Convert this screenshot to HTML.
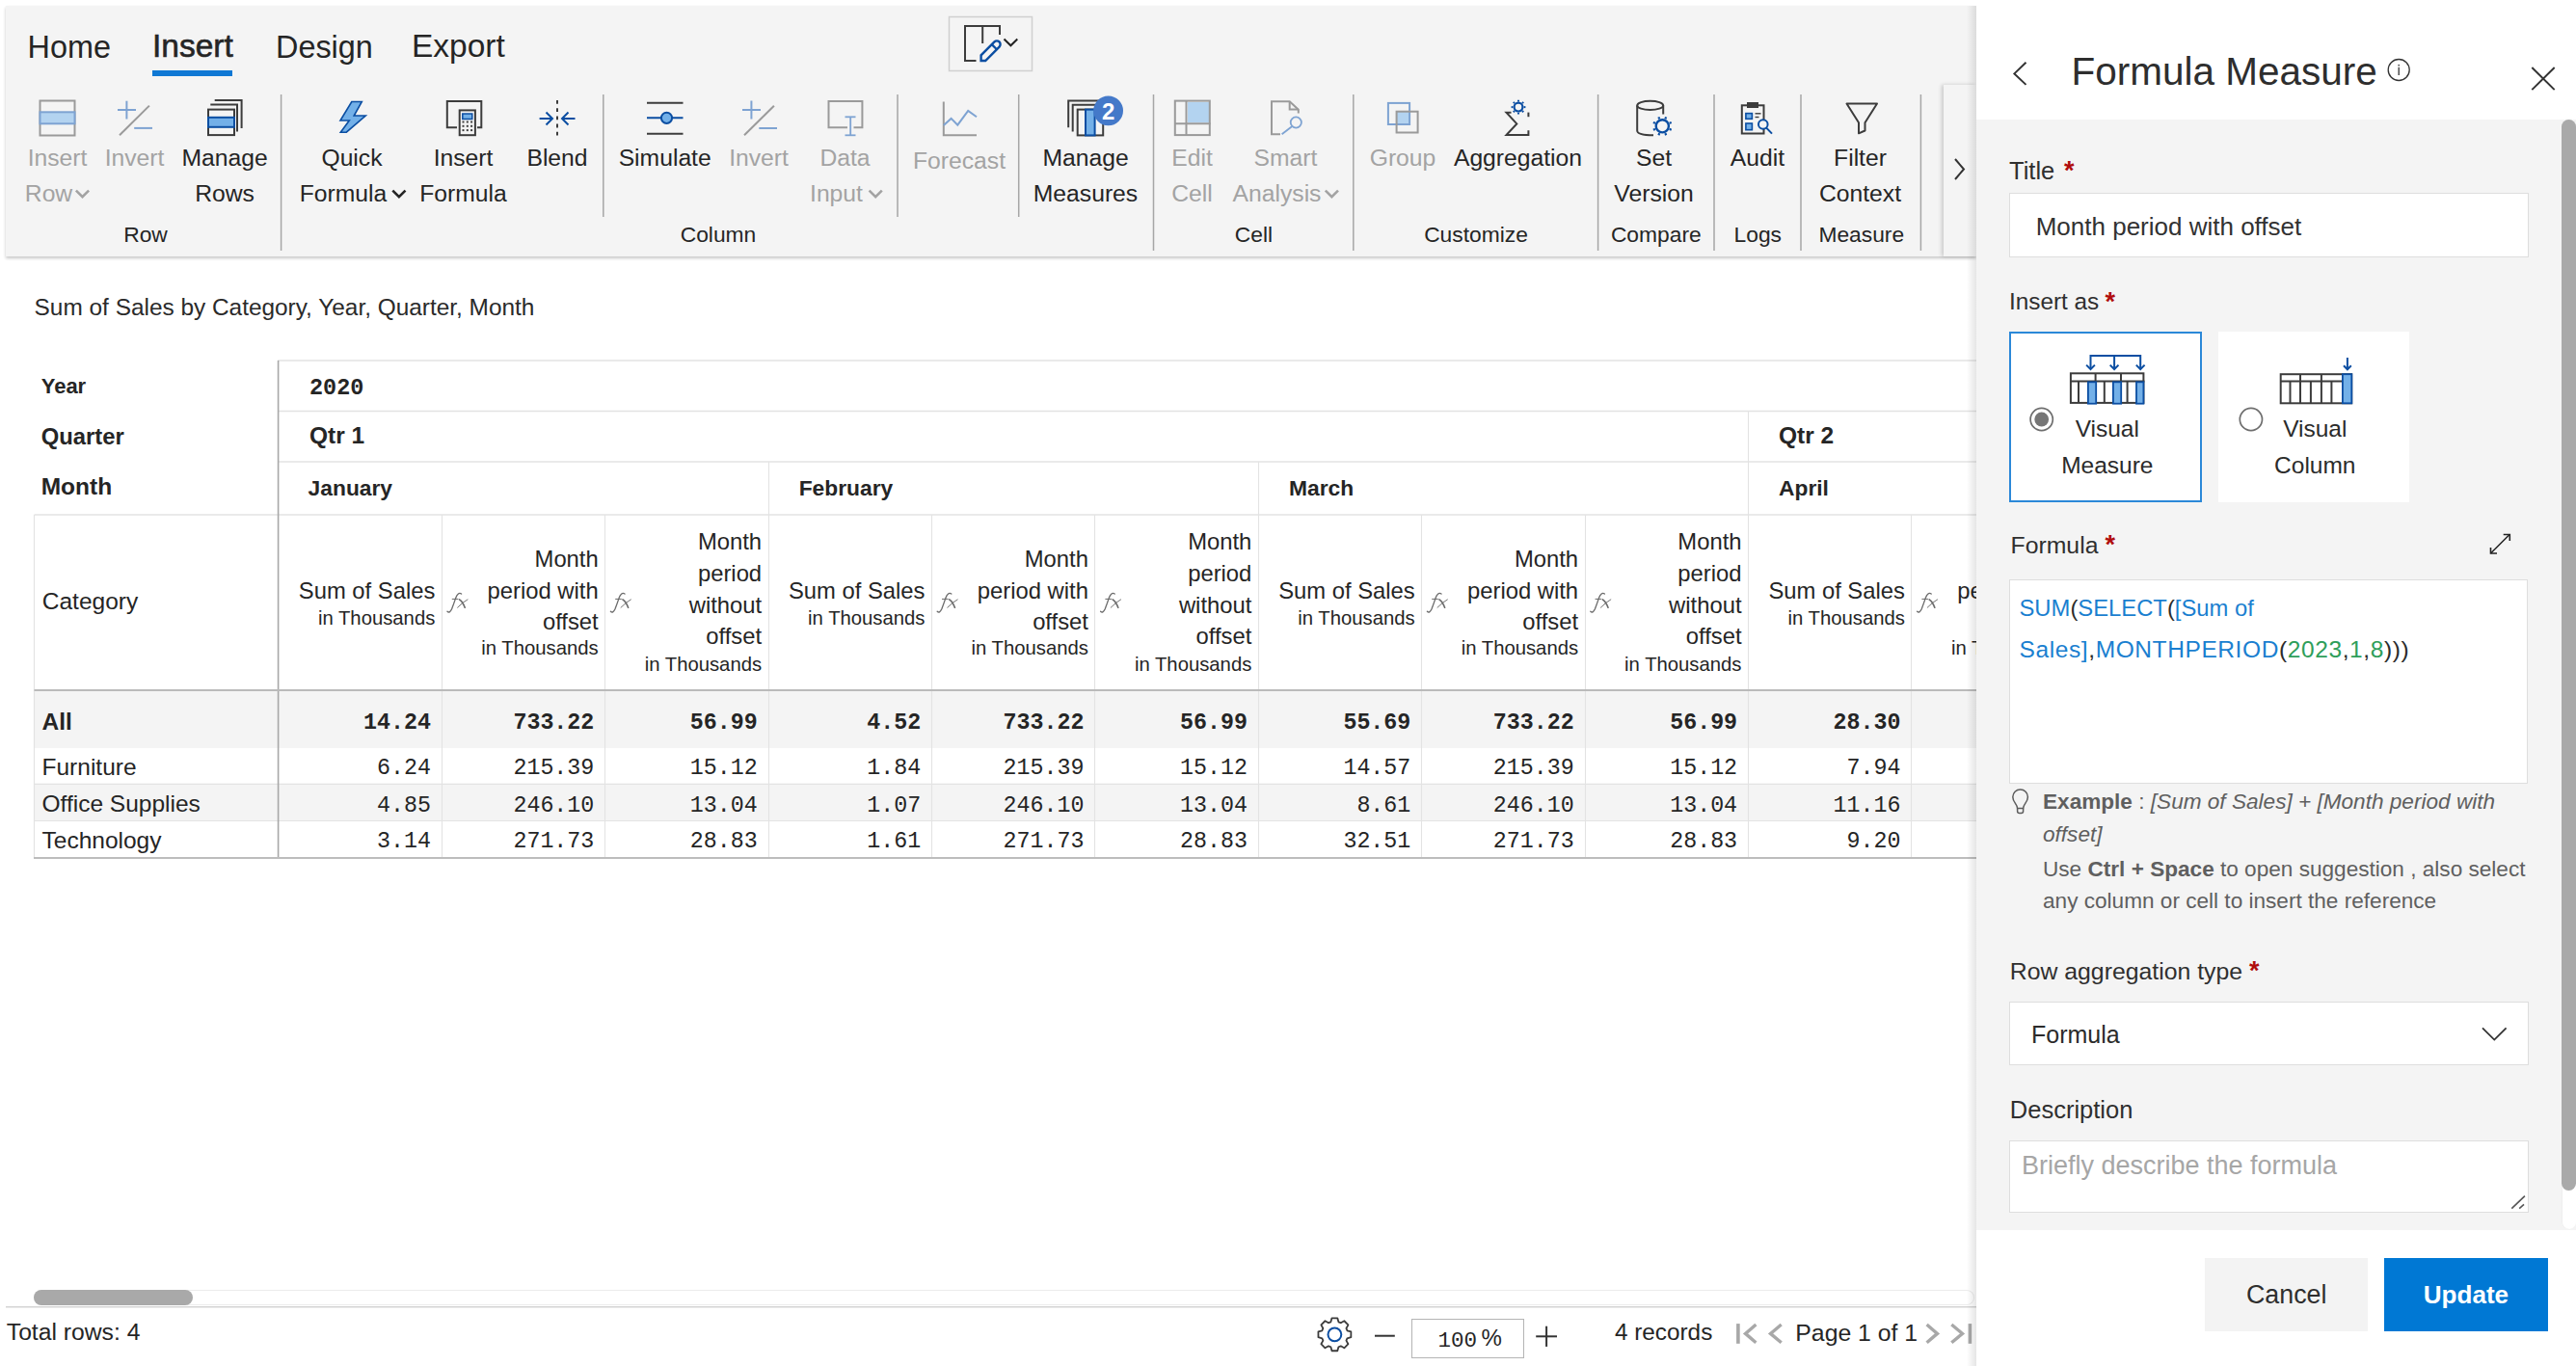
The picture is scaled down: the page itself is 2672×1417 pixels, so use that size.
<!DOCTYPE html>
<html><head><meta charset="utf-8"><style>
html,body{margin:0;padding:0;width:2672px;height:1417px;overflow:hidden;background:#fff;}
.t{position:absolute;white-space:pre;}
.b{position:absolute;}
svg{position:absolute;left:0;top:0;}
</style></head><body>
<div class="b" style="left:6px;top:6px;width:2044px;height:260px;background:#f4f4f4;box-shadow:0 2px 3px rgba(0,0,0,0.22);"></div><div class="t" style="top:28.77px;font-size:32.4px;line-height:40px;font-family:'Liberation Sans', sans-serif;color:#252525;left:28.50px;">Home</div><div class="t" style="top:27.39px;font-size:33.5px;line-height:42px;font-family:'Liberation Sans', sans-serif;color:#252525;left:158.00px;-webkit-text-stroke:0.6px #252525;">Insert</div><div class="t" style="top:28.77px;font-size:32.4px;line-height:40px;font-family:'Liberation Sans', sans-serif;color:#252525;left:286.00px;">Design</div><div class="t" style="top:27.39px;font-size:33.5px;line-height:42px;font-family:'Liberation Sans', sans-serif;color:#252525;left:427.00px;">Export</div><div class="b" style="left:158px;top:73px;width:83px;height:6px;background:#0f78d4;"></div><div class="t" style="top:147.64px;font-size:24.7px;line-height:31px;font-family:'Liberation Sans', sans-serif;color:#a3a3a3;left:-540.50px;width:1200px;text-align:center;">Insert</div><div class="t" style="top:184.94px;font-size:24.7px;line-height:31px;font-family:'Liberation Sans', sans-serif;color:#a3a3a3;left:-549.50px;width:1200px;text-align:center;">Row</div><div class="t" style="top:147.64px;font-size:24.7px;line-height:31px;font-family:'Liberation Sans', sans-serif;color:#a3a3a3;left:-460.50px;width:1200px;text-align:center;">Invert</div><div class="t" style="top:147.64px;font-size:24.7px;line-height:31px;font-family:'Liberation Sans', sans-serif;color:#252525;left:-367.00px;width:1200px;text-align:center;">Manage</div><div class="t" style="top:184.94px;font-size:24.7px;line-height:31px;font-family:'Liberation Sans', sans-serif;color:#252525;left:-367.00px;width:1200px;text-align:center;">Rows</div><div class="t" style="top:228.60px;font-size:22.8px;line-height:28px;font-family:'Liberation Sans', sans-serif;color:#252525;left:-449.00px;width:1200px;text-align:center;">Row</div><div class="t" style="top:147.64px;font-size:24.7px;line-height:31px;font-family:'Liberation Sans', sans-serif;color:#252525;left:-235.00px;width:1200px;text-align:center;">Quick</div><div class="t" style="top:184.94px;font-size:24.7px;line-height:31px;font-family:'Liberation Sans', sans-serif;color:#252525;left:-244.00px;width:1200px;text-align:center;">Formula</div><div class="t" style="top:147.64px;font-size:24.7px;line-height:31px;font-family:'Liberation Sans', sans-serif;color:#252525;left:-119.50px;width:1200px;text-align:center;">Insert</div><div class="t" style="top:184.94px;font-size:24.7px;line-height:31px;font-family:'Liberation Sans', sans-serif;color:#252525;left:-119.50px;width:1200px;text-align:center;">Formula</div><div class="t" style="top:147.64px;font-size:24.7px;line-height:31px;font-family:'Liberation Sans', sans-serif;color:#252525;left:-22.00px;width:1200px;text-align:center;">Blend</div><div class="t" style="top:147.64px;font-size:24.7px;line-height:31px;font-family:'Liberation Sans', sans-serif;color:#252525;left:89.70px;width:1200px;text-align:center;">Simulate</div><div class="t" style="top:147.64px;font-size:24.7px;line-height:31px;font-family:'Liberation Sans', sans-serif;color:#a3a3a3;left:187.00px;width:1200px;text-align:center;">Invert</div><div class="t" style="top:147.64px;font-size:24.7px;line-height:31px;font-family:'Liberation Sans', sans-serif;color:#a3a3a3;left:276.50px;width:1200px;text-align:center;">Data</div><div class="t" style="top:184.94px;font-size:24.7px;line-height:31px;font-family:'Liberation Sans', sans-serif;color:#a3a3a3;left:267.50px;width:1200px;text-align:center;">Input</div><div class="t" style="top:150.94px;font-size:24.7px;line-height:31px;font-family:'Liberation Sans', sans-serif;color:#a3a3a3;left:395.00px;width:1200px;text-align:center;">Forecast</div><div class="t" style="top:147.64px;font-size:24.7px;line-height:31px;font-family:'Liberation Sans', sans-serif;color:#252525;left:526.00px;width:1200px;text-align:center;">Manage</div><div class="t" style="top:184.94px;font-size:24.7px;line-height:31px;font-family:'Liberation Sans', sans-serif;color:#252525;left:526.00px;width:1200px;text-align:center;">Measures</div><div class="t" style="top:228.60px;font-size:22.8px;line-height:28px;font-family:'Liberation Sans', sans-serif;color:#252525;left:145.00px;width:1200px;text-align:center;">Column</div><div class="t" style="top:147.64px;font-size:24.7px;line-height:31px;font-family:'Liberation Sans', sans-serif;color:#a3a3a3;left:636.50px;width:1200px;text-align:center;">Edit</div><div class="t" style="top:184.94px;font-size:24.7px;line-height:31px;font-family:'Liberation Sans', sans-serif;color:#a3a3a3;left:636.50px;width:1200px;text-align:center;">Cell</div><div class="t" style="top:147.64px;font-size:24.7px;line-height:31px;font-family:'Liberation Sans', sans-serif;color:#a3a3a3;left:733.50px;width:1200px;text-align:center;">Smart</div><div class="t" style="top:184.94px;font-size:24.7px;line-height:31px;font-family:'Liberation Sans', sans-serif;color:#a3a3a3;left:724.50px;width:1200px;text-align:center;">Analysis</div><div class="t" style="top:228.60px;font-size:22.8px;line-height:28px;font-family:'Liberation Sans', sans-serif;color:#252525;left:700.40px;width:1200px;text-align:center;">Cell</div><div class="t" style="top:147.64px;font-size:24.7px;line-height:31px;font-family:'Liberation Sans', sans-serif;color:#a3a3a3;left:855.00px;width:1200px;text-align:center;">Group</div><div class="t" style="top:147.64px;font-size:24.7px;line-height:31px;font-family:'Liberation Sans', sans-serif;color:#252525;left:974.50px;width:1200px;text-align:center;">Aggregation</div><div class="t" style="top:228.60px;font-size:22.8px;line-height:28px;font-family:'Liberation Sans', sans-serif;color:#252525;left:931.00px;width:1200px;text-align:center;">Customize</div><div class="t" style="top:147.64px;font-size:24.7px;line-height:31px;font-family:'Liberation Sans', sans-serif;color:#252525;left:1115.50px;width:1200px;text-align:center;">Set</div><div class="t" style="top:184.94px;font-size:24.7px;line-height:31px;font-family:'Liberation Sans', sans-serif;color:#252525;left:1115.50px;width:1200px;text-align:center;">Version</div><div class="t" style="top:228.60px;font-size:22.8px;line-height:28px;font-family:'Liberation Sans', sans-serif;color:#252525;left:1117.80px;width:1200px;text-align:center;">Compare</div><div class="t" style="top:147.64px;font-size:24.7px;line-height:31px;font-family:'Liberation Sans', sans-serif;color:#252525;left:1223.00px;width:1200px;text-align:center;">Audit</div><div class="t" style="top:228.60px;font-size:22.8px;line-height:28px;font-family:'Liberation Sans', sans-serif;color:#252525;left:1223.30px;width:1200px;text-align:center;">Logs</div><div class="t" style="top:147.64px;font-size:24.7px;line-height:31px;font-family:'Liberation Sans', sans-serif;color:#252525;left:1329.50px;width:1200px;text-align:center;">Filter</div><div class="t" style="top:184.94px;font-size:24.7px;line-height:31px;font-family:'Liberation Sans', sans-serif;color:#252525;left:1329.50px;width:1200px;text-align:center;">Context</div><div class="t" style="top:228.60px;font-size:22.8px;line-height:28px;font-family:'Liberation Sans', sans-serif;color:#252525;left:1330.80px;width:1200px;text-align:center;">Measure</div><div class="b" style="left:2016px;top:88px;width:34px;height:178px;background:#f4f4f4;box-shadow:-2px 0 4px rgba(0,0,0,0.18);"></div><div class="b" style="left:1231.5px;top:105.6px;width:22.3px;height:21.7px;background:#b3d3f0;"></div><div class="b" style="left:1448.6px;top:115.7px;width:13.5px;height:13.3px;background:#b3d3f0;"></div><div class="b" style="left:1812px;top:106.3px;width:12.4px;height:5.4px;background:#3c3c3c;"></div><div class="t" style="top:304.25px;font-size:24.4px;line-height:30px;font-family:'Liberation Sans', sans-serif;color:#2a2a2a;left:35.60px;">Sum of Sales by Category, Year, Quarter, Month</div><div class="b" style="left:36px;top:717px;width:2014px;height:59px;background:#f4f4f4;"></div><div class="b" style="left:36px;top:813.5px;width:2014px;height:38px;background:#f4f4f4;"></div><div class="t" style="top:387.38px;font-size:22px;line-height:28px;font-family:'Liberation Sans', sans-serif;color:#252525;font-weight:700;left:42.70px;">Year</div><div class="t" style="top:437.75px;font-size:23.8px;line-height:30px;font-family:'Liberation Sans', sans-serif;color:#252525;font-weight:700;left:42.70px;">Quarter</div><div class="t" style="top:489.01px;font-size:24.5px;line-height:31px;font-family:'Liberation Sans', sans-serif;color:#252525;font-weight:700;left:42.70px;">Month</div><div class="t" style="top:387.65px;font-size:23.5px;line-height:29px;font-family:'Liberation Mono', monospace;color:#252525;font-weight:700;left:321.00px;">2020</div><div class="t" style="top:436.41px;font-size:24.5px;line-height:31px;font-family:'Liberation Sans', sans-serif;color:#252525;font-weight:700;left:321.00px;">Qtr 1</div><div class="t" style="top:436.41px;font-size:24.5px;line-height:31px;font-family:'Liberation Sans', sans-serif;color:#252525;font-weight:700;left:1845.00px;">Qtr 2</div><div class="t" style="top:491.90px;font-size:22.8px;line-height:28px;font-family:'Liberation Sans', sans-serif;color:#252525;font-weight:700;left:319.60px;">January</div><div class="t" style="top:491.90px;font-size:22.8px;line-height:28px;font-family:'Liberation Sans', sans-serif;color:#252525;font-weight:700;left:828.70px;">February</div><div class="t" style="top:491.90px;font-size:22.8px;line-height:28px;font-family:'Liberation Sans', sans-serif;color:#252525;font-weight:700;left:1337.00px;">March</div><div class="t" style="top:491.90px;font-size:22.8px;line-height:28px;font-family:'Liberation Sans', sans-serif;color:#252525;font-weight:700;left:1845.00px;">April</div><div class="t" style="top:608.41px;font-size:24.5px;line-height:31px;font-family:'Liberation Sans', sans-serif;color:#252525;left:43.80px;">Category</div><div class="t" style="top:597.75px;font-size:23.8px;line-height:30px;font-family:'Liberation Sans', sans-serif;color:#252525;right:2220.70px;text-align:right;">Sum of Sales</div><div class="t" style="top:628.77px;font-size:20.3px;line-height:25px;font-family:'Liberation Sans', sans-serif;color:#252525;right:2220.70px;text-align:right;">in Thousands</div><div class="t" style="top:564.75px;font-size:23.8px;line-height:30px;font-family:'Liberation Sans', sans-serif;color:#252525;right:2051.30px;text-align:right;">Month</div><div class="t" style="top:597.75px;font-size:23.8px;line-height:30px;font-family:'Liberation Sans', sans-serif;color:#252525;right:2051.30px;text-align:right;">period with</div><div class="t" style="top:629.75px;font-size:23.8px;line-height:30px;font-family:'Liberation Sans', sans-serif;color:#252525;right:2051.30px;text-align:right;">offset</div><div class="t" style="top:660.47px;font-size:20.3px;line-height:25px;font-family:'Liberation Sans', sans-serif;color:#252525;right:2051.30px;text-align:right;">in Thousands</div><div class="t" style="top:547.25px;font-size:23.8px;line-height:30px;font-family:'Liberation Sans', sans-serif;color:#252525;right:1881.90px;text-align:right;">Month</div><div class="t" style="top:579.75px;font-size:23.8px;line-height:30px;font-family:'Liberation Sans', sans-serif;color:#252525;right:1881.90px;text-align:right;">period</div><div class="t" style="top:612.75px;font-size:23.8px;line-height:30px;font-family:'Liberation Sans', sans-serif;color:#252525;right:1881.90px;text-align:right;">without</div><div class="t" style="top:644.75px;font-size:23.8px;line-height:30px;font-family:'Liberation Sans', sans-serif;color:#252525;right:1881.90px;text-align:right;">offset</div><div class="t" style="top:677.17px;font-size:20.3px;line-height:25px;font-family:'Liberation Sans', sans-serif;color:#252525;right:1881.90px;text-align:right;">in Thousands</div><div class="t" style="top:597.75px;font-size:23.8px;line-height:30px;font-family:'Liberation Sans', sans-serif;color:#252525;right:1712.50px;text-align:right;">Sum of Sales</div><div class="t" style="top:628.77px;font-size:20.3px;line-height:25px;font-family:'Liberation Sans', sans-serif;color:#252525;right:1712.50px;text-align:right;">in Thousands</div><div class="t" style="top:564.75px;font-size:23.8px;line-height:30px;font-family:'Liberation Sans', sans-serif;color:#252525;right:1543.10px;text-align:right;">Month</div><div class="t" style="top:597.75px;font-size:23.8px;line-height:30px;font-family:'Liberation Sans', sans-serif;color:#252525;right:1543.10px;text-align:right;">period with</div><div class="t" style="top:629.75px;font-size:23.8px;line-height:30px;font-family:'Liberation Sans', sans-serif;color:#252525;right:1543.10px;text-align:right;">offset</div><div class="t" style="top:660.47px;font-size:20.3px;line-height:25px;font-family:'Liberation Sans', sans-serif;color:#252525;right:1543.10px;text-align:right;">in Thousands</div><div class="t" style="top:547.25px;font-size:23.8px;line-height:30px;font-family:'Liberation Sans', sans-serif;color:#252525;right:1373.70px;text-align:right;">Month</div><div class="t" style="top:579.75px;font-size:23.8px;line-height:30px;font-family:'Liberation Sans', sans-serif;color:#252525;right:1373.70px;text-align:right;">period</div><div class="t" style="top:612.75px;font-size:23.8px;line-height:30px;font-family:'Liberation Sans', sans-serif;color:#252525;right:1373.70px;text-align:right;">without</div><div class="t" style="top:644.75px;font-size:23.8px;line-height:30px;font-family:'Liberation Sans', sans-serif;color:#252525;right:1373.70px;text-align:right;">offset</div><div class="t" style="top:677.17px;font-size:20.3px;line-height:25px;font-family:'Liberation Sans', sans-serif;color:#252525;right:1373.70px;text-align:right;">in Thousands</div><div class="t" style="top:597.75px;font-size:23.8px;line-height:30px;font-family:'Liberation Sans', sans-serif;color:#252525;right:1204.30px;text-align:right;">Sum of Sales</div><div class="t" style="top:628.77px;font-size:20.3px;line-height:25px;font-family:'Liberation Sans', sans-serif;color:#252525;right:1204.30px;text-align:right;">in Thousands</div><div class="t" style="top:564.75px;font-size:23.8px;line-height:30px;font-family:'Liberation Sans', sans-serif;color:#252525;right:1034.90px;text-align:right;">Month</div><div class="t" style="top:597.75px;font-size:23.8px;line-height:30px;font-family:'Liberation Sans', sans-serif;color:#252525;right:1034.90px;text-align:right;">period with</div><div class="t" style="top:629.75px;font-size:23.8px;line-height:30px;font-family:'Liberation Sans', sans-serif;color:#252525;right:1034.90px;text-align:right;">offset</div><div class="t" style="top:660.47px;font-size:20.3px;line-height:25px;font-family:'Liberation Sans', sans-serif;color:#252525;right:1034.90px;text-align:right;">in Thousands</div><div class="t" style="top:547.25px;font-size:23.8px;line-height:30px;font-family:'Liberation Sans', sans-serif;color:#252525;right:865.50px;text-align:right;">Month</div><div class="t" style="top:579.75px;font-size:23.8px;line-height:30px;font-family:'Liberation Sans', sans-serif;color:#252525;right:865.50px;text-align:right;">period</div><div class="t" style="top:612.75px;font-size:23.8px;line-height:30px;font-family:'Liberation Sans', sans-serif;color:#252525;right:865.50px;text-align:right;">without</div><div class="t" style="top:644.75px;font-size:23.8px;line-height:30px;font-family:'Liberation Sans', sans-serif;color:#252525;right:865.50px;text-align:right;">offset</div><div class="t" style="top:677.17px;font-size:20.3px;line-height:25px;font-family:'Liberation Sans', sans-serif;color:#252525;right:865.50px;text-align:right;">in Thousands</div><div class="t" style="top:597.75px;font-size:23.8px;line-height:30px;font-family:'Liberation Sans', sans-serif;color:#252525;right:696.10px;text-align:right;">Sum of Sales</div><div class="t" style="top:628.77px;font-size:20.3px;line-height:25px;font-family:'Liberation Sans', sans-serif;color:#252525;right:696.10px;text-align:right;">in Thousands</div><div class="t" style="top:564.75px;font-size:23.8px;line-height:30px;font-family:'Liberation Sans', sans-serif;color:#252525;right:526.70px;text-align:right;">Month</div><div class="t" style="top:597.75px;font-size:23.8px;line-height:30px;font-family:'Liberation Sans', sans-serif;color:#252525;right:526.70px;text-align:right;">period with</div><div class="t" style="top:629.75px;font-size:23.8px;line-height:30px;font-family:'Liberation Sans', sans-serif;color:#252525;right:526.70px;text-align:right;">offset</div><div class="t" style="top:660.47px;font-size:20.3px;line-height:25px;font-family:'Liberation Sans', sans-serif;color:#252525;right:526.70px;text-align:right;">in Thousands</div><div class="t" style="top:732.81px;font-size:24.5px;line-height:31px;font-family:'Liberation Sans', sans-serif;color:#252525;font-weight:700;left:43.50px;">All</div><div class="t" style="top:736.10px;font-size:23.3px;line-height:29px;font-family:'Liberation Mono', monospace;color:#252525;font-weight:700;right:2225.10px;text-align:right;">14.24</div><div class="t" style="top:736.10px;font-size:23.3px;line-height:29px;font-family:'Liberation Mono', monospace;color:#252525;font-weight:700;right:2055.70px;text-align:right;">733.22</div><div class="t" style="top:736.10px;font-size:23.3px;line-height:29px;font-family:'Liberation Mono', monospace;color:#252525;font-weight:700;right:1886.30px;text-align:right;">56.99</div><div class="t" style="top:736.10px;font-size:23.3px;line-height:29px;font-family:'Liberation Mono', monospace;color:#252525;font-weight:700;right:1716.90px;text-align:right;">4.52</div><div class="t" style="top:736.10px;font-size:23.3px;line-height:29px;font-family:'Liberation Mono', monospace;color:#252525;font-weight:700;right:1547.50px;text-align:right;">733.22</div><div class="t" style="top:736.10px;font-size:23.3px;line-height:29px;font-family:'Liberation Mono', monospace;color:#252525;font-weight:700;right:1378.10px;text-align:right;">56.99</div><div class="t" style="top:736.10px;font-size:23.3px;line-height:29px;font-family:'Liberation Mono', monospace;color:#252525;font-weight:700;right:1208.70px;text-align:right;">55.69</div><div class="t" style="top:736.10px;font-size:23.3px;line-height:29px;font-family:'Liberation Mono', monospace;color:#252525;font-weight:700;right:1039.30px;text-align:right;">733.22</div><div class="t" style="top:736.10px;font-size:23.3px;line-height:29px;font-family:'Liberation Mono', monospace;color:#252525;font-weight:700;right:869.90px;text-align:right;">56.99</div><div class="t" style="top:736.10px;font-size:23.3px;line-height:29px;font-family:'Liberation Mono', monospace;color:#252525;font-weight:700;right:700.50px;text-align:right;">28.30</div><div class="t" style="top:780.01px;font-size:24.5px;line-height:31px;font-family:'Liberation Sans', sans-serif;color:#252525;left:43.50px;">Furniture</div><div class="t" style="top:783.30px;font-size:23.3px;line-height:29px;font-family:'Liberation Mono', monospace;color:#252525;right:2225.10px;text-align:right;">6.24</div><div class="t" style="top:783.30px;font-size:23.3px;line-height:29px;font-family:'Liberation Mono', monospace;color:#252525;right:2055.70px;text-align:right;">215.39</div><div class="t" style="top:783.30px;font-size:23.3px;line-height:29px;font-family:'Liberation Mono', monospace;color:#252525;right:1886.30px;text-align:right;">15.12</div><div class="t" style="top:783.30px;font-size:23.3px;line-height:29px;font-family:'Liberation Mono', monospace;color:#252525;right:1716.90px;text-align:right;">1.84</div><div class="t" style="top:783.30px;font-size:23.3px;line-height:29px;font-family:'Liberation Mono', monospace;color:#252525;right:1547.50px;text-align:right;">215.39</div><div class="t" style="top:783.30px;font-size:23.3px;line-height:29px;font-family:'Liberation Mono', monospace;color:#252525;right:1378.10px;text-align:right;">15.12</div><div class="t" style="top:783.30px;font-size:23.3px;line-height:29px;font-family:'Liberation Mono', monospace;color:#252525;right:1208.70px;text-align:right;">14.57</div><div class="t" style="top:783.30px;font-size:23.3px;line-height:29px;font-family:'Liberation Mono', monospace;color:#252525;right:1039.30px;text-align:right;">215.39</div><div class="t" style="top:783.30px;font-size:23.3px;line-height:29px;font-family:'Liberation Mono', monospace;color:#252525;right:869.90px;text-align:right;">15.12</div><div class="t" style="top:783.30px;font-size:23.3px;line-height:29px;font-family:'Liberation Mono', monospace;color:#252525;right:700.50px;text-align:right;">7.94</div><div class="t" style="top:818.21px;font-size:24.5px;line-height:31px;font-family:'Liberation Sans', sans-serif;color:#252525;left:43.50px;">Office Supplies</div><div class="t" style="top:821.50px;font-size:23.3px;line-height:29px;font-family:'Liberation Mono', monospace;color:#252525;right:2225.10px;text-align:right;">4.85</div><div class="t" style="top:821.50px;font-size:23.3px;line-height:29px;font-family:'Liberation Mono', monospace;color:#252525;right:2055.70px;text-align:right;">246.10</div><div class="t" style="top:821.50px;font-size:23.3px;line-height:29px;font-family:'Liberation Mono', monospace;color:#252525;right:1886.30px;text-align:right;">13.04</div><div class="t" style="top:821.50px;font-size:23.3px;line-height:29px;font-family:'Liberation Mono', monospace;color:#252525;right:1716.90px;text-align:right;">1.07</div><div class="t" style="top:821.50px;font-size:23.3px;line-height:29px;font-family:'Liberation Mono', monospace;color:#252525;right:1547.50px;text-align:right;">246.10</div><div class="t" style="top:821.50px;font-size:23.3px;line-height:29px;font-family:'Liberation Mono', monospace;color:#252525;right:1378.10px;text-align:right;">13.04</div><div class="t" style="top:821.50px;font-size:23.3px;line-height:29px;font-family:'Liberation Mono', monospace;color:#252525;right:1208.70px;text-align:right;">8.61</div><div class="t" style="top:821.50px;font-size:23.3px;line-height:29px;font-family:'Liberation Mono', monospace;color:#252525;right:1039.30px;text-align:right;">246.10</div><div class="t" style="top:821.50px;font-size:23.3px;line-height:29px;font-family:'Liberation Mono', monospace;color:#252525;right:869.90px;text-align:right;">13.04</div><div class="t" style="top:821.50px;font-size:23.3px;line-height:29px;font-family:'Liberation Mono', monospace;color:#252525;right:700.50px;text-align:right;">11.16</div><div class="t" style="top:856.01px;font-size:24.5px;line-height:31px;font-family:'Liberation Sans', sans-serif;color:#252525;left:43.50px;">Technology</div><div class="t" style="top:859.30px;font-size:23.3px;line-height:29px;font-family:'Liberation Mono', monospace;color:#252525;right:2225.10px;text-align:right;">3.14</div><div class="t" style="top:859.30px;font-size:23.3px;line-height:29px;font-family:'Liberation Mono', monospace;color:#252525;right:2055.70px;text-align:right;">271.73</div><div class="t" style="top:859.30px;font-size:23.3px;line-height:29px;font-family:'Liberation Mono', monospace;color:#252525;right:1886.30px;text-align:right;">28.83</div><div class="t" style="top:859.30px;font-size:23.3px;line-height:29px;font-family:'Liberation Mono', monospace;color:#252525;right:1716.90px;text-align:right;">1.61</div><div class="t" style="top:859.30px;font-size:23.3px;line-height:29px;font-family:'Liberation Mono', monospace;color:#252525;right:1547.50px;text-align:right;">271.73</div><div class="t" style="top:859.30px;font-size:23.3px;line-height:29px;font-family:'Liberation Mono', monospace;color:#252525;right:1378.10px;text-align:right;">28.83</div><div class="t" style="top:859.30px;font-size:23.3px;line-height:29px;font-family:'Liberation Mono', monospace;color:#252525;right:1208.70px;text-align:right;">32.51</div><div class="t" style="top:859.30px;font-size:23.3px;line-height:29px;font-family:'Liberation Mono', monospace;color:#252525;right:1039.30px;text-align:right;">271.73</div><div class="t" style="top:859.30px;font-size:23.3px;line-height:29px;font-family:'Liberation Mono', monospace;color:#252525;right:869.90px;text-align:right;">28.83</div><div class="t" style="top:859.30px;font-size:23.3px;line-height:29px;font-family:'Liberation Mono', monospace;color:#252525;right:700.50px;text-align:right;">9.20</div><div class="b" style="left:35px;top:1338px;width:2013px;height:16.3px;background:#fff;border-radius:8px;box-shadow:inset 0 0 0 1px #ececec;"></div><div class="b" style="left:35.3px;top:1338px;width:165.2px;height:16.3px;background:#a9a9a9;border-radius:8px;"></div><div class="t" style="top:1365.94px;font-size:24.7px;line-height:31px;font-family:'Liberation Sans', sans-serif;color:#252525;left:6.80px;">Total rows: 4</div><div class="b" style="left:1464.3px;top:1367.9px;width:116.3px;height:41.1px;background:#fff;box-sizing:border-box;border:1.5px solid #b4b4b4;"></div><div class="t" style="top:1376.71px;font-size:22.5px;line-height:28px;font-family:'Liberation Mono', monospace;color:#252525;left:1491.50px;">100</div><div class="t" style="top:1373.38px;font-size:24px;line-height:30px;font-family:'Liberation Sans', sans-serif;color:#252525;left:1536.50px;">%</div><div class="t" style="top:1367.18px;font-size:24.3px;line-height:30px;font-family:'Liberation Sans', sans-serif;color:#252525;left:1675.00px;">4 records</div><div class="t" style="top:1366.81px;font-size:24.8px;line-height:31px;font-family:'Liberation Sans', sans-serif;color:#252525;left:1862.30px;">Page 1 of 1</div>
<svg width="2672" height="1417" viewBox="0 0 2672 1417" fill="none" stroke-linecap="butt"><rect x="984.5" y="17.5" width="86" height="56" stroke="#d0d0d0" stroke-width="1.5" fill="none" /><polyline points="1037,36 1037,27 1001,27 1001,63 1012.5,63" stroke="#3c3c3c" stroke-width="2" fill="none" /><line x1="1019.2" y1="27" x2="1019.2" y2="45" stroke="#3c3c3c" stroke-width="2" /><path d="M1031.45,43.45 L1017.6,57.3 L1017.6,63 L1022.2,63 L1036.55,48.55 A3.6,3.6 0 0 0 1031.45,43.45 Z" stroke="#0b4ea2" stroke-width="2.4" fill="#f4f4f4" stroke-linejoin="miter"/><line x1="1028.8" y1="46.1" x2="1033.9" y2="51.2" stroke="#0b4ea2" stroke-width="2.3" /><polyline points="1041.5,40.5 1048.4,47.3 1055.3,40.5" stroke="#222" stroke-width="2" fill="none" /><line x1="291.6" y1="98" x2="291.6" y2="260" stroke="#a6a6a6" stroke-width="1.5" /><line x1="625.8" y1="98" x2="625.8" y2="225" stroke="#a6a6a6" stroke-width="1.5" /><line x1="931" y1="98" x2="931" y2="225" stroke="#a6a6a6" stroke-width="1.5" /><line x1="1056.7" y1="98" x2="1056.7" y2="225" stroke="#a6a6a6" stroke-width="1.5" /><line x1="1196.5" y1="98" x2="1196.5" y2="260" stroke="#a6a6a6" stroke-width="1.5" /><line x1="1403.8" y1="98" x2="1403.8" y2="260" stroke="#a6a6a6" stroke-width="1.5" /><line x1="1657.6" y1="98" x2="1657.6" y2="260" stroke="#a6a6a6" stroke-width="1.5" /><line x1="1778" y1="98" x2="1778" y2="260" stroke="#a6a6a6" stroke-width="1.5" /><line x1="1868" y1="98" x2="1868" y2="260" stroke="#a6a6a6" stroke-width="1.5" /><line x1="1992.4" y1="98" x2="1992.4" y2="260" stroke="#a6a6a6" stroke-width="1.5" /><polyline points="78.89999999999999,197.60000000000002 85.5,204.20000000000002 92.1,197.60000000000002" stroke="#a3a3a3" stroke-width="2.6" fill="none" /><polyline points="407.3,197.60000000000002 413.9,204.20000000000002 420.5,197.60000000000002" stroke="#252525" stroke-width="2.6" fill="none" /><polyline points="901.5999999999999,197.60000000000002 908.1999999999999,204.20000000000002 914.8,197.60000000000002" stroke="#a3a3a3" stroke-width="2.6" fill="none" /><polyline points="1374.8,197.60000000000002 1381.4,204.20000000000002 1388.0,197.60000000000002" stroke="#a3a3a3" stroke-width="2.6" fill="none" /><polyline points="2028,165 2037,175.5 2028,186" stroke="#333" stroke-width="2" fill="none" /><rect x="41.5" y="104.5" width="36" height="36" stroke="#9a9a9a" stroke-width="2" fill="none" /><rect x="41.5" y="116.3" width="36" height="12" stroke="#7ea3d2" stroke-width="2" fill="#b3d3f0" /><line x1="122" y1="114" x2="141" y2="114" stroke="#7ea3d2" stroke-width="2" /><line x1="131.4" y1="104.7" x2="131.4" y2="123.5" stroke="#7ea3d2" stroke-width="2" /><line x1="124" y1="140.3" x2="154.9" y2="109.6" stroke="#9a9a9a" stroke-width="2" /><line x1="139.2" y1="132.9" x2="158" y2="132.9" stroke="#7ea3d2" stroke-width="2" /><polyline points="222.7,104 250.6,104 250.6,133" stroke="#3c3c3c" stroke-width="2" fill="none" /><polyline points="218.3,108.6 246,108.6 246,136.6" stroke="#3c3c3c" stroke-width="2" fill="none" /><rect x="216" y="113.6" width="27" height="26.5" stroke="#3c3c3c" stroke-width="2" fill="none" /><rect x="216" y="121.8" width="27" height="10" stroke="#0b4ea2" stroke-width="2" fill="#73b0e8" /><polygon points="364.8,105.5 375.3,105.5 367.2,120 379.2,120 359.3,137.2 353.3,137.2 362.3,125 353,125" stroke="#0b4ea2" stroke-width="1.6" fill="#73b0e8" /><polyline points="474,132.2 463.8,132.2 463.8,104.9 499.3,104.9 499.3,132.2 495,132.2" stroke="#3c3c3c" stroke-width="2" fill="none" /><rect x="476.7" y="114.4" width="16.2" height="25.8" stroke="#3c3c3c" stroke-width="2" fill="#f4f4f4" /><rect x="479.8" y="118" width="10" height="5.5" stroke="#0b4ea2" stroke-width="1.5" fill="#73b0e8" /><rect x="479.5" y="125.5" width="2" height="2" fill="#3c3c3c"/><rect x="483.8" y="125.5" width="2" height="2" fill="#3c3c3c"/><rect x="488.1" y="125.5" width="2" height="2" fill="#3c3c3c"/><rect x="479.5" y="129.8" width="2" height="2" fill="#3c3c3c"/><rect x="483.8" y="129.8" width="2" height="2" fill="#3c3c3c"/><rect x="488.1" y="129.8" width="2" height="2" fill="#3c3c3c"/><rect x="479.5" y="134.1" width="2" height="2" fill="#3c3c3c"/><rect x="483.8" y="134.1" width="2" height="2" fill="#3c3c3c"/><rect x="488.1" y="134.1" width="2" height="2" fill="#3c3c3c"/><line x1="578" y1="104" x2="578" y2="141" stroke="#3c3c3c" stroke-width="2" stroke-dasharray="3.8,4.4"/><line x1="559.6" y1="123" x2="573" y2="123" stroke="#0b4ea2" stroke-width="2" /><polyline points="566.5,116.5 573,123 566.5,129.5" stroke="#0b4ea2" stroke-width="2" fill="none" /><line x1="596.5" y1="123" x2="583" y2="123" stroke="#0b4ea2" stroke-width="2" /><polyline points="589.5,116.5 583,123 589.5,129.5" stroke="#0b4ea2" stroke-width="2" fill="none" /><line x1="671" y1="106.7" x2="708.5" y2="106.7" stroke="#3c3c3c" stroke-width="2" /><line x1="671" y1="122.3" x2="708.5" y2="122.3" stroke="#0b4ea2" stroke-width="2" /><circle cx="691.5" cy="122.3" r="5.6" stroke="#0b4ea2" stroke-width="2" fill="#73b0e8"/><line x1="671" y1="138.7" x2="708.5" y2="138.7" stroke="#3c3c3c" stroke-width="2" /><line x1="770" y1="114" x2="789" y2="114" stroke="#7ea3d2" stroke-width="2" /><line x1="779.4" y1="104.5" x2="779.4" y2="123.5" stroke="#7ea3d2" stroke-width="2" /><line x1="772" y1="140.3" x2="802.9" y2="109.7" stroke="#9a9a9a" stroke-width="2" /><line x1="787.3" y1="133" x2="806" y2="133" stroke="#7ea3d2" stroke-width="2" /><polyline points="879,132.2 859.5,132.2 859.5,105 894.4,105 894.4,132.2 885.5,132.2" stroke="#9a9a9a" stroke-width="2" fill="none" /><line x1="882.2" y1="121.3" x2="882.2" y2="140.3" stroke="#7ea3d2" stroke-width="1.8" /><line x1="876.5" y1="121.3" x2="887.5" y2="121.3" stroke="#7ea3d2" stroke-width="1.8" /><line x1="876.5" y1="140.3" x2="887.5" y2="140.3" stroke="#7ea3d2" stroke-width="1.8" /><polyline points="978.8,105.4 978.8,140.3 1013,140.3" stroke="#9a9a9a" stroke-width="2" fill="none" /><polyline points="978.8,130.1 986.6,122.9 993.3,129.7 1004.2,114.9 1013,121.2" stroke="#7ea3d2" stroke-width="2" fill="none" /><polyline points="1108.2,132.3 1108.2,104.5 1140,104.5" stroke="#3c3c3c" stroke-width="2" fill="none" /><polyline points="1112.7,136.5 1112.7,108.8 1140,108.8" stroke="#3c3c3c" stroke-width="2" fill="none" /><rect x="1117.7" y="113.6" width="26.5" height="26.8" stroke="#3c3c3c" stroke-width="2" fill="#f4f4f4" /><rect x="1126" y="113.6" width="9.6" height="26.8" stroke="#0b4ea2" stroke-width="2" fill="#73b0e8" /><circle cx="1149.6" cy="114.8" r="15.4" fill="#4479c9"/><text x="1149.6" y="123.5" font-family="Liberation Sans" font-weight="700" font-size="24" fill="#fff" text-anchor="middle">2</text><rect x="1218.8" y="104.6" width="36" height="35.5" stroke="#9a9a9a" stroke-width="2" fill="none" /><line x1="1230.5" y1="104" x2="1230.5" y2="141" stroke="#9a9a9a" stroke-width="2" /><line x1="1218" y1="128.3" x2="1255.6" y2="128.3" stroke="#9a9a9a" stroke-width="2" /><polyline points="1328,139.2 1319,139.2 1319,105.3 1337.7,105.3 1346.8,113.8 1346.8,117.6" stroke="#9a9a9a" stroke-width="2" fill="none" /><polyline points="1337.7,105.3 1337.7,113.4 1346.8,113.4" stroke="#9a9a9a" stroke-width="2" fill="none" /><circle cx="1344.3" cy="127" r="5.6" stroke="#7ea3d2" stroke-width="1.8"/><line x1="1340" y1="131.3" x2="1329.6" y2="139.3" stroke="#7ea3d2" stroke-width="1.8" /><rect x="1439.9" y="106.9" width="22.2" height="22.1" stroke="#7ea3d2" stroke-width="2" fill="none" /><rect x="1448.6" y="115.7" width="22" height="21.8" stroke="#9a9a9a" stroke-width="2" fill="none" /><polyline points="1567.5,116.8 1562.5,116.8 1573.3,128.4 1562.5,140 1585.4,140 1585.4,135.2" stroke="#3c3c3c" stroke-width="2" fill="none" /><line x1="1585.4" y1="116.6" x2="1585.4" y2="121.2" stroke="#3c3c3c" stroke-width="2" /><circle cx="1575" cy="111.1" r="4.4" stroke="#0b4ea2" stroke-width="2.2"/><line x1="1580.6" y1="111.1" x2="1582.4" y2="111.1" stroke="#0b4ea2" stroke-width="2" /><line x1="1578.96" y1="115.06" x2="1580.23" y2="116.33" stroke="#0b4ea2" stroke-width="2" /><line x1="1575.0" y1="116.7" x2="1575.0" y2="118.5" stroke="#0b4ea2" stroke-width="2" /><line x1="1571.04" y1="115.06" x2="1569.77" y2="116.33" stroke="#0b4ea2" stroke-width="2" /><line x1="1569.4" y1="111.1" x2="1567.6" y2="111.1" stroke="#0b4ea2" stroke-width="2" /><line x1="1571.04" y1="107.14" x2="1569.77" y2="105.87" stroke="#0b4ea2" stroke-width="2" /><line x1="1575.0" y1="105.5" x2="1575.0" y2="103.7" stroke="#0b4ea2" stroke-width="2" /><line x1="1578.96" y1="107.14" x2="1580.23" y2="105.87" stroke="#0b4ea2" stroke-width="2" /><ellipse cx="1711.7" cy="109.4" rx="13.5" ry="4.6" stroke="#3c3c3c" stroke-width="2"/><line x1="1725.2" y1="109.4" x2="1725.2" y2="118.5" stroke="#3c3c3c" stroke-width="2" /><path d="M1698.2,109.4 L1698.2,135.5 Q1698.2,140.3 1715,140.3" stroke="#3c3c3c" stroke-width="2"/><circle cx="1724.3" cy="130.8" r="6.6" stroke="#0b4ea2" stroke-width="2.4" fill="#f4f4f4"/><line x1="1731.69" y1="133.86" x2="1733.72" y2="134.7" stroke="#0b4ea2" stroke-width="2.2" /><line x1="1727.36" y1="138.19" x2="1728.2" y2="140.22" stroke="#0b4ea2" stroke-width="2.2" /><line x1="1721.24" y1="138.19" x2="1720.4" y2="140.22" stroke="#0b4ea2" stroke-width="2.2" /><line x1="1716.91" y1="133.86" x2="1714.88" y2="134.7" stroke="#0b4ea2" stroke-width="2.2" /><line x1="1716.91" y1="127.74" x2="1714.88" y2="126.9" stroke="#0b4ea2" stroke-width="2.2" /><line x1="1721.24" y1="123.41" x2="1720.4" y2="121.38" stroke="#0b4ea2" stroke-width="2.2" /><line x1="1727.36" y1="123.41" x2="1728.2" y2="121.38" stroke="#0b4ea2" stroke-width="2.2" /><line x1="1731.69" y1="127.74" x2="1733.72" y2="126.9" stroke="#0b4ea2" stroke-width="2.2" /><rect x="1806.8" y="109.3" width="22.7" height="29.2" stroke="#3c3c3c" stroke-width="2" fill="none" /><rect x="1810.9" y="117.6" width="6.5" height="5.7" stroke="#0b4ea2" stroke-width="1.6" fill="#73b0e8" /><rect x="1810.9" y="128" width="6.5" height="6.7" stroke="#0b4ea2" stroke-width="1.6" fill="#73b0e8" /><line x1="1820.5" y1="117.8" x2="1826.5" y2="117.8" stroke="#3c3c3c" stroke-width="1.4" /><line x1="1820.5" y1="121.5" x2="1824.5" y2="121.5" stroke="#3c3c3c" stroke-width="1.4" /><circle cx="1828.8" cy="129" r="4.8" stroke="#0b4ea2" stroke-width="2" fill="#f4f4f4"/><line x1="1832.2" y1="132.6" x2="1838" y2="138.6" stroke="#0b4ea2" stroke-width="2" /><path d="M1915.5,107.5 L1947,107.5 L1934.5,127.3 L1934.5,135.5 L1928,138.3 L1928,127.3 Z" stroke="#3c3c3c" stroke-width="2" stroke-linejoin="round"/><line x1="288" y1="374" x2="2050" y2="374" stroke="#e3e3e3" stroke-width="1.5" /><line x1="288" y1="426.6" x2="2050" y2="426.6" stroke="#e3e3e3" stroke-width="1.5" /><line x1="288" y1="478.9" x2="2050" y2="478.9" stroke="#e3e3e3" stroke-width="1.5" /><line x1="35.5" y1="534" x2="2050" y2="534" stroke="#e3e3e3" stroke-width="1.5" /><line x1="35.5" y1="813.3" x2="2050" y2="813.3" stroke="#e3e3e3" stroke-width="1.2" /><line x1="35.5" y1="851.5" x2="2050" y2="851.5" stroke="#e3e3e3" stroke-width="1.2" /><line x1="35.5" y1="534" x2="35.5" y2="890" stroke="#e3e3e3" stroke-width="1.2" /><line x1="458.5" y1="534" x2="458.5" y2="890" stroke="#e3e3e3" stroke-width="1.1" /><line x1="627.5" y1="534" x2="627.5" y2="890" stroke="#e3e3e3" stroke-width="1.1" /><line x1="797.5" y1="478.9" x2="797.5" y2="890" stroke="#e3e3e3" stroke-width="1.1" /><line x1="966.5" y1="534" x2="966.5" y2="890" stroke="#e3e3e3" stroke-width="1.1" /><line x1="1135.5" y1="534" x2="1135.5" y2="890" stroke="#e3e3e3" stroke-width="1.1" /><line x1="1305.5" y1="478.9" x2="1305.5" y2="890" stroke="#e3e3e3" stroke-width="1.1" /><line x1="1474.5" y1="534" x2="1474.5" y2="890" stroke="#e3e3e3" stroke-width="1.1" /><line x1="1644.5" y1="534" x2="1644.5" y2="890" stroke="#e3e3e3" stroke-width="1.1" /><line x1="1813.5" y1="426.6" x2="1813.5" y2="890" stroke="#e3e3e3" stroke-width="1.1" /><line x1="1982.5" y1="534" x2="1982.5" y2="890" stroke="#e3e3e3" stroke-width="1.1" /><line x1="2152.5" y1="534" x2="2152.5" y2="890" stroke="#e3e3e3" stroke-width="1.1" /><line x1="288.6" y1="374" x2="288.6" y2="890" stroke="#a8a8a8" stroke-width="1.6" /><line x1="35.5" y1="716" x2="2050" y2="716" stroke="#bababa" stroke-width="2" /><line x1="35" y1="890" x2="2050" y2="890" stroke="#bdbdbd" stroke-width="2" /><g transform="translate(-0.00,0)" stroke="#6c6c6c" fill="none" stroke-linecap="round"><path d="M464,634.2 Q466.3,636.6 468.6,631.8 Q470.6,626.5 472.6,620.6 Q475.2,613.6 478.6,616" stroke-width="1.35"/><path d="M469.2,621.4 L475,621.4" stroke-width="1.0"/><path d="M476.6,621.9 Q479.6,623.4 482.2,630.2" stroke-width="1.65"/><path d="M485,621.9 Q480.4,624.4 474.6,630.2" stroke-width="0.95"/></g><g transform="translate(169.40,0)" stroke="#6c6c6c" fill="none" stroke-linecap="round"><path d="M464,634.2 Q466.3,636.6 468.6,631.8 Q470.6,626.5 472.6,620.6 Q475.2,613.6 478.6,616" stroke-width="1.35"/><path d="M469.2,621.4 L475,621.4" stroke-width="1.0"/><path d="M476.6,621.9 Q479.6,623.4 482.2,630.2" stroke-width="1.65"/><path d="M485,621.9 Q480.4,624.4 474.6,630.2" stroke-width="0.95"/></g><g transform="translate(508.20,0)" stroke="#6c6c6c" fill="none" stroke-linecap="round"><path d="M464,634.2 Q466.3,636.6 468.6,631.8 Q470.6,626.5 472.6,620.6 Q475.2,613.6 478.6,616" stroke-width="1.35"/><path d="M469.2,621.4 L475,621.4" stroke-width="1.0"/><path d="M476.6,621.9 Q479.6,623.4 482.2,630.2" stroke-width="1.65"/><path d="M485,621.9 Q480.4,624.4 474.6,630.2" stroke-width="0.95"/></g><g transform="translate(677.60,0)" stroke="#6c6c6c" fill="none" stroke-linecap="round"><path d="M464,634.2 Q466.3,636.6 468.6,631.8 Q470.6,626.5 472.6,620.6 Q475.2,613.6 478.6,616" stroke-width="1.35"/><path d="M469.2,621.4 L475,621.4" stroke-width="1.0"/><path d="M476.6,621.9 Q479.6,623.4 482.2,630.2" stroke-width="1.65"/><path d="M485,621.9 Q480.4,624.4 474.6,630.2" stroke-width="0.95"/></g><g transform="translate(1016.40,0)" stroke="#6c6c6c" fill="none" stroke-linecap="round"><path d="M464,634.2 Q466.3,636.6 468.6,631.8 Q470.6,626.5 472.6,620.6 Q475.2,613.6 478.6,616" stroke-width="1.35"/><path d="M469.2,621.4 L475,621.4" stroke-width="1.0"/><path d="M476.6,621.9 Q479.6,623.4 482.2,630.2" stroke-width="1.65"/><path d="M485,621.9 Q480.4,624.4 474.6,630.2" stroke-width="0.95"/></g><g transform="translate(1185.80,0)" stroke="#6c6c6c" fill="none" stroke-linecap="round"><path d="M464,634.2 Q466.3,636.6 468.6,631.8 Q470.6,626.5 472.6,620.6 Q475.2,613.6 478.6,616" stroke-width="1.35"/><path d="M469.2,621.4 L475,621.4" stroke-width="1.0"/><path d="M476.6,621.9 Q479.6,623.4 482.2,630.2" stroke-width="1.65"/><path d="M485,621.9 Q480.4,624.4 474.6,630.2" stroke-width="0.95"/></g><g transform="translate(1524.60,0)" stroke="#6c6c6c" fill="none" stroke-linecap="round"><path d="M464,634.2 Q466.3,636.6 468.6,631.8 Q470.6,626.5 472.6,620.6 Q475.2,613.6 478.6,616" stroke-width="1.35"/><path d="M469.2,621.4 L475,621.4" stroke-width="1.0"/><path d="M476.6,621.9 Q479.6,623.4 482.2,630.2" stroke-width="1.65"/><path d="M485,621.9 Q480.4,624.4 474.6,630.2" stroke-width="0.95"/></g><line x1="6" y1="1355.8" x2="2050" y2="1355.8" stroke="#d4d4d4" stroke-width="1.5" /><polygon points="1397.39,1380.28 1401.35,1381.39 1401.35,1387.21 1397.39,1388.32 1396.43,1390.65 1398.44,1394.23 1394.33,1398.34 1390.75,1396.33 1388.42,1397.29 1387.31,1401.25 1381.49,1401.25 1380.38,1397.29 1378.05,1396.33 1374.47,1398.34 1370.36,1394.23 1372.37,1390.65 1371.41,1388.32 1367.45,1387.21 1367.45,1381.39 1371.41,1380.28 1372.37,1377.95 1370.36,1374.37 1374.47,1370.26 1378.05,1372.27 1380.38,1371.31 1381.49,1367.35 1387.31,1367.35 1388.42,1371.31 1390.75,1372.27 1394.33,1370.26 1398.44,1374.37 1396.43,1377.95" stroke="#3c3c3c" stroke-width="1.8" fill="#fff" stroke-linejoin="round"/><circle cx="1384.4" cy="1384.3" r="6.9" stroke="#0b4ea2" stroke-width="2"/><line x1="1426" y1="1385.7" x2="1446.8" y2="1385.7" stroke="#333" stroke-width="2" /><line x1="1593.2" y1="1386.3" x2="1615" y2="1386.3" stroke="#333" stroke-width="2" /><line x1="1604.1" y1="1375.7" x2="1604.1" y2="1396.9" stroke="#333" stroke-width="2" /><line x1="1802.9" y1="1373.1" x2="1802.9" y2="1393.8" stroke="#a8a8a8" stroke-width="3.6" /><polyline points="1821.4,1374 1810.5,1383.4 1821.4,1392.8" stroke="#a8a8a8" stroke-width="3.4" fill="none" /><polyline points="1847.7,1374 1836.5,1383.4 1847.7,1392.8" stroke="#a8a8a8" stroke-width="3.4" fill="none" /><polyline points="1998.6,1374 2009.5,1383.4 1998.6,1392.8" stroke="#a8a8a8" stroke-width="3.4" fill="none" /><polyline points="2024.3,1374 2035.5,1383.4 2024.3,1392.8" stroke="#a8a8a8" stroke-width="3.4" fill="none" /><line x1="2043.4" y1="1373.1" x2="2043.4" y2="1393.8" stroke="#a8a8a8" stroke-width="3.6" /></svg>
<div class="b" style="left:2040px;top:6px;width:10px;height:1411px;background:linear-gradient(to right, rgba(0,0,0,0), rgba(0,0,0,0.10));"></div><div class="b" style="left:2050px;top:6px;width:622px;height:1411px;background:#fff;"></div><div class="b" style="left:2050px;top:124px;width:622px;height:1151.5px;background:#f4f4f4;"></div><div class="t" style="top:49.17px;font-size:40.5px;line-height:51px;font-family:'Liberation Sans', sans-serif;color:#2e2e2e;left:2148.50px;">Formula Measure</div><div class="b" style="left:2657px;top:1200px;width:15px;height:75px;background:#fff;border-radius:0 0 8px 8px;box-shadow:inset 1px 0 0 #eee;"></div><div class="b" style="left:2657px;top:124px;width:15px;height:1110.5px;background:#a9a9a9;border-radius:8px;"></div><div class="t" style="top:160.76px;font-size:25.5px;line-height:32px;font-family:'Liberation Sans', sans-serif;color:#2f2f2f;left:2084.00px;">Title</div><div class="t" style="top:160.24px;font-size:27px;line-height:34px;font-family:'Liberation Sans', sans-serif;color:#b00d0d;font-weight:700;left:2141.00px;">*</div><div class="b" style="left:2084px;top:200.2px;width:538.8px;height:67px;background:#fff;box-sizing:border-box;border:1.5px solid #dedede;"></div><div class="t" style="top:218.99px;font-size:26px;line-height:32px;font-family:'Liberation Sans', sans-serif;color:#323232;left:2111.70px;">Month period with offset</div><div class="t" style="top:298.28px;font-size:24.3px;line-height:30px;font-family:'Liberation Sans', sans-serif;color:#2f2f2f;left:2084.00px;">Insert as</div><div class="t" style="top:296.34px;font-size:27px;line-height:34px;font-family:'Liberation Sans', sans-serif;color:#b00d0d;font-weight:700;left:2183.50px;">*</div><div class="b" style="left:2084px;top:344px;width:200px;height:176.5px;background:#fff;box-sizing:border-box;border:2px solid #2b88d8;"></div><div class="b" style="left:2301px;top:344px;width:198px;height:176.5px;background:#fff;"></div><div class="t" style="top:429.01px;font-size:24.5px;line-height:31px;font-family:'Liberation Sans', sans-serif;color:#2b2b2b;left:1585.80px;width:1200px;text-align:center;">Visual</div><div class="t" style="top:466.61px;font-size:24.5px;line-height:31px;font-family:'Liberation Sans', sans-serif;color:#2b2b2b;left:1585.80px;width:1200px;text-align:center;">Measure</div><div class="t" style="top:429.01px;font-size:24.5px;line-height:31px;font-family:'Liberation Sans', sans-serif;color:#2b2b2b;left:1801.30px;width:1200px;text-align:center;">Visual</div><div class="t" style="top:466.61px;font-size:24.5px;line-height:31px;font-family:'Liberation Sans', sans-serif;color:#2b2b2b;left:1801.30px;width:1200px;text-align:center;">Column</div><div class="t" style="top:549.61px;font-size:24.8px;line-height:31px;font-family:'Liberation Sans', sans-serif;color:#2f2f2f;left:2085.50px;">Formula</div><div class="t" style="top:548.34px;font-size:27px;line-height:34px;font-family:'Liberation Sans', sans-serif;color:#b00d0d;font-weight:700;left:2183.50px;">*</div><div class="b" style="left:2084.4px;top:600.6px;width:538.1px;height:212.8px;background:#fff;box-sizing:border-box;border:1.5px solid #dedede;"></div><div class="t" style="top:616.05px;font-size:23.8px;line-height:30px;font-family:'Liberation Sans', sans-serif;color:#2b2b2b;left:2094.50px;"><span style="color:#1a7fd0">SUM</span>(<span style="color:#1a7fd0">SELECT</span>(<span style="color:#1a7fd0">[Sum of</span></div><div class="t" style="top:658.01px;font-size:24.5px;line-height:31px;font-family:'Liberation Sans', sans-serif;color:#2b2b2b;letter-spacing:0.6px;left:2094.50px;"><span style="color:#1a7fd0">Sales]</span>,<span style="color:#1a7fd0">MONTHPERIOD</span>(<span style="color:#2e9e5a">2023</span>,<span style="color:#2e9e5a">1</span>,<span style="color:#2e9e5a">8</span>)))</div><div class="t" style="top:817.87px;font-size:22.6px;line-height:28px;font-family:'Liberation Sans', sans-serif;color:#5f5f5f;left:2119.00px;"><b>Example</b> : <i>[Sum of Sales] + [Month period with</i></div><div class="t" style="top:852.47px;font-size:22.6px;line-height:28px;font-family:'Liberation Sans', sans-serif;color:#5f5f5f;left:2119.00px;"><i>offset]</i></div><div class="t" style="top:887.57px;font-size:22.6px;line-height:28px;font-family:'Liberation Sans', sans-serif;color:#5f5f5f;left:2119.00px;">Use <b>Ctrl + Space</b> to open suggestion , also select</div><div class="t" style="top:921.17px;font-size:22.6px;line-height:28px;font-family:'Liberation Sans', sans-serif;color:#5f5f5f;left:2119.00px;">any column or cell to insert the reference</div><div class="t" style="top:991.71px;font-size:24.8px;line-height:31px;font-family:'Liberation Sans', sans-serif;color:#2f2f2f;left:2084.80px;">Row aggregation type</div><div class="t" style="top:990.44px;font-size:27px;line-height:34px;font-family:'Liberation Sans', sans-serif;color:#b00d0d;font-weight:700;left:2333.10px;">*</div><div class="b" style="left:2084px;top:1039px;width:538.7px;height:66.4px;background:#fff;box-sizing:border-box;border:1.5px solid #dedede;"></div><div class="t" style="top:1057.54px;font-size:25px;line-height:31px;font-family:'Liberation Sans', sans-serif;color:#2b2b2b;left:2107.00px;">Formula</div><div class="t" style="top:1134.86px;font-size:25.5px;line-height:32px;font-family:'Liberation Sans', sans-serif;color:#2f2f2f;left:2084.80px;">Description</div><div class="b" style="left:2084px;top:1183px;width:538.7px;height:75.2px;background:#fff;box-sizing:border-box;border:1.5px solid #dedede;"></div><div class="t" style="top:1191.84px;font-size:27px;line-height:34px;font-family:'Liberation Sans', sans-serif;color:#a6a6a6;left:2097.00px;">Briefly describe the formula</div><div class="b" style="left:2287px;top:1305.2px;width:169.4px;height:76.1px;background:#f3f3f3;"></div><div class="t" style="top:1326.31px;font-size:26.8px;line-height:34px;font-family:'Liberation Sans', sans-serif;color:#2e2e2e;left:1771.70px;width:1200px;text-align:center;">Cancel</div><div class="b" style="left:2473px;top:1305.2px;width:169.8px;height:76.1px;background:#0078d4;"></div><div class="t" style="top:1327.06px;font-size:26.1px;line-height:33px;font-family:'Liberation Sans', sans-serif;color:#fff;font-weight:700;left:1957.90px;width:1200px;text-align:center;">Update</div>
<svg width="2672" height="1417" viewBox="0 0 2672 1417" fill="none"><polyline points="2101.5,64.8 2089.4,76.4 2101.5,87.9" stroke="#333" stroke-width="2" fill="none" /><circle cx="2488.2" cy="72.5" r="11" stroke="#333" stroke-width="1.3"/><line x1="2488.2" y1="69.8" x2="2488.2" y2="78" stroke="#333" stroke-width="1.3" /><rect x="2487.5" y="66.9" width="1.4" height="1.5" fill="#333"/><line x1="2626.3" y1="70" x2="2649.7" y2="93.1" stroke="#333" stroke-width="2" /><line x1="2649.7" y1="70" x2="2626.3" y2="93.1" stroke="#333" stroke-width="2" /><circle cx="2117.7" cy="435" r="11.6" stroke="#6e6e6e" stroke-width="1.7"/><circle cx="2117.7" cy="435" r="7.4" fill="#767676"/><circle cx="2334.9" cy="435" r="11.6" stroke="#6e6e6e" stroke-width="1.7"/><rect x="2147.9" y="387.3" width="75.5" height="30.6" stroke="#3c3c3c" stroke-width="2" fill="none" /><line x1="2147" y1="395.5" x2="2224.4" y2="395.5" stroke="#3c3c3c" stroke-width="2" /><line x1="2173.6" y1="387" x2="2173.6" y2="395.5" stroke="#3c3c3c" stroke-width="2" /><line x1="2200" y1="387" x2="2200" y2="395.5" stroke="#3c3c3c" stroke-width="2" /><line x1="2156" y1="395.5" x2="2156" y2="418" stroke="#3c3c3c" stroke-width="2" /><line x1="2182.8" y1="395.5" x2="2182.8" y2="418" stroke="#3c3c3c" stroke-width="2" /><line x1="2206.6" y1="395.5" x2="2206.6" y2="418" stroke="#3c3c3c" stroke-width="2" /><rect x="2165.9" y="396.3" width="8.299999999999818" height="22.4" stroke="#0b4ea2" stroke-width="1.8" fill="#73b0e8" /><rect x="2191.9" y="396.3" width="8.299999999999818" height="22.4" stroke="#0b4ea2" stroke-width="1.8" fill="#73b0e8" /><rect x="2216.0" y="396.3" width="7.4000000000001815" height="22.4" stroke="#0b4ea2" stroke-width="1.8" fill="#73b0e8" /><polyline points="2168.5,382 2168.5,369.1 2220.2,369.1 2220.2,382" stroke="#0b4ea2" stroke-width="2" fill="none" /><line x1="2193.1" y1="369.1" x2="2193.1" y2="382" stroke="#0b4ea2" stroke-width="2" /><polyline points="2164.1,378.6 2168.5,383 2172.9,378.6" stroke="#0b4ea2" stroke-width="2" fill="none" /><polyline points="2188.7,378.6 2193.1,383 2197.5,378.6" stroke="#0b4ea2" stroke-width="2" fill="none" /><polyline points="2215.7999999999997,378.6 2220.2,383 2224.6,378.6" stroke="#0b4ea2" stroke-width="2" fill="none" /><rect x="2365.7" y="388.2" width="73.5" height="30.1" stroke="#3c3c3c" stroke-width="2" fill="none" /><line x1="2365" y1="395.5" x2="2430" y2="395.5" stroke="#3c3c3c" stroke-width="2" /><line x1="2386" y1="388" x2="2386" y2="418" stroke="#3c3c3c" stroke-width="2" /><line x1="2407.9" y1="388" x2="2407.9" y2="418" stroke="#3c3c3c" stroke-width="2" /><line x1="2375.5" y1="395.5" x2="2375.5" y2="418" stroke="#3c3c3c" stroke-width="2" /><line x1="2396.9" y1="395.5" x2="2396.9" y2="418" stroke="#3c3c3c" stroke-width="2" /><line x1="2418.4" y1="395.5" x2="2418.4" y2="418" stroke="#3c3c3c" stroke-width="2" /><rect x="2429.9" y="388.2" width="9.4" height="30.1" stroke="#0b4ea2" stroke-width="1.8" fill="#73b0e8" /><line x1="2434.9" y1="371" x2="2434.9" y2="383" stroke="#0b4ea2" stroke-width="2" /><polyline points="2431,379.3 2434.9,383.3 2438.8,379.3" stroke="#0b4ea2" stroke-width="2" fill="none" /><line x1="2583.5" y1="574" x2="2602.8" y2="554.8" stroke="#222" stroke-width="1.5" /><polyline points="2596.7,554.5 2603.3,554.5 2603.3,560.9" stroke="#222" stroke-width="1.6" fill="none" /><polyline points="2583.5,568 2583.5,574 2590,574" stroke="#222" stroke-width="1.6" fill="none" /><path d="M2092.6,838.5 C2092.6,834 2087.8,832.5 2087.8,826.8 A7.8,7.8 0 0 1 2103.4,826.8 C2103.4,832.5 2098.6,834 2098.6,838.5 Z" stroke="#5c5c5c" stroke-width="1.5"/><path d="M2092.6,838.5 L2092.6,841.5 Q2092.6,843.5 2094.6,843.5 L2096.6,843.5 Q2098.6,843.5 2098.6,841.5 L2098.6,838.5" stroke="#5c5c5c" stroke-width="1.5"/><polyline points="2575,1066.3 2587.3,1078.6 2599.6,1066.3" stroke="#333" stroke-width="1.8" fill="none" /><line x1="2605.3" y1="1253.7" x2="2618.9" y2="1240.6" stroke="#555" stroke-width="1.6" /><line x1="2613.2" y1="1253.7" x2="2618" y2="1249.4" stroke="#555" stroke-width="1.6" /></svg>
</body></html>
